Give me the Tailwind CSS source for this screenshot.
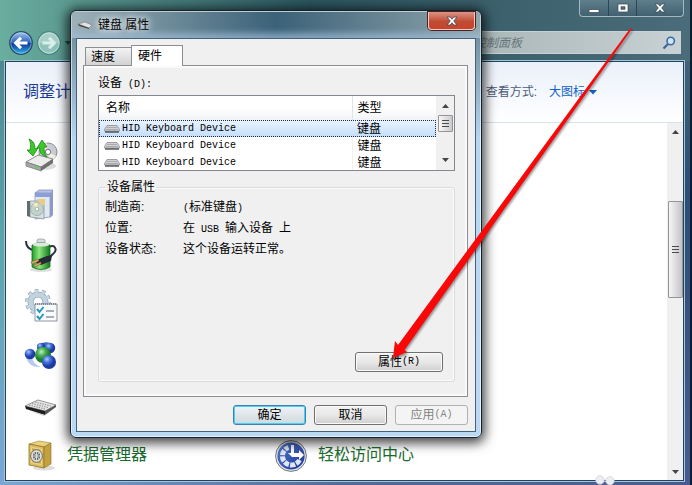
<!DOCTYPE html>
<html lang="zh-CN">
<head>
<meta charset="utf-8">
<meta name="viewport" content="width=device-width, initial-scale=1">
<title>键盘 属性</title>
<script src="https://cdn.jsdelivr.net/npm/@tailwindcss/browser@4"></script>
</head>
<body class="font-['Liberation_Sans','Noto_Sans_CJK_SC',sans-serif] text-[12px] leading-4 text-black">
<div class="relative flex h-screen flex-col overflow-hidden border-r-2 border-[#0b1f33] bg-linear-to-b from-[#4a7f86] via-[#5ba5ab] via-50% to-[#7aa6d6]">
  <!-- Right edge of the glass frame -->
  <div class="absolute inset-y-0 right-0 w-[6px] bg-linear-to-b from-[#4b6c7a] via-[#2d4c76] via-40% to-[#4a5a90]"></div>
  <div class="absolute inset-x-0 bottom-0 h-1 bg-linear-to-r from-[#7aa6d6] via-[#56699c] to-[#4a5a90]"></div>
  <!-- Control panel window -->
  <header class="relative flex h-[61px] shrink-0 justify-between bg-linear-to-r from-[#6aae9f] via-[#2c5660] via-45% to-[#4b6c7a]">
    <nav class="flex items-center gap-1 self-end pb-[6px] pl-[9px]">
      <button type="button" aria-label="后退" class="h-6 w-6">
        <svg viewBox="0 0 24 24" class="h-6 w-6">
          <defs><linearGradient id="back" x2="0" y2="1"><stop offset="0" stop-color="#a9c6ee"/><stop offset=".48" stop-color="#2b62bb"/><stop offset=".52" stop-color="#0b3691"/><stop offset="1" stop-color="#35b5ee"/></linearGradient></defs>
          <circle cx="12" cy="12" r="11.3" fill="url(#back)" stroke="#254f6e" stroke-width="1.2"/>
          <circle cx="12" cy="12" r="10.2" fill="none" stroke="#cfe6f4" stroke-opacity=".6" stroke-width=".8"/>
          <path d="M18.5 12H7M12 6.8 6.6 12l5.400 5.200" fill="none" stroke="#fff" stroke-width="3"/>
        </svg>
      </button>
      <button type="button" aria-label="前进" class="h-6 w-6">
        <svg viewBox="0 0 24 24" class="h-6 w-6">
          <circle cx="12" cy="12" r="11.300" fill="#8fc3ba" stroke="#4c8583" stroke-width="1.2"/>
          <path d="M1.800 12a10.200 10.200 0 0 1 20.400 0Z" fill="#a8d0c8"/>
          <circle cx="12" cy="12" r="10.200" fill="none" stroke="#d2ebe6" stroke-width=".8"/>
          <path d="M5.500 12H17M12 6.800l5.400 5.200-5.400 5.200" fill="none" stroke="#d9efea" stroke-width="3"/>
        </svg>
      </button>
      <svg viewBox="0 0 6 5" class="h-[5px] w-[6px]"><path d="M0 0h6L3 4Z" fill="#1d4747"/></svg>
    </nav>
    <div class="flex flex-col items-end">
      <div class="mr-[6px] flex h-[17px] divide-x divide-[#2b4654] overflow-hidden rounded-b-[4px] border border-t-0 border-[#a3b8c0] bg-linear-to-b from-[#607f8c] to-[#416171]">
        <button type="button" aria-label="最小化" class="flex w-[29px] items-center justify-center"><svg viewBox="0 0 12 12" class="h-3 w-3"><path d="M1 7.500h10v3H1Z" fill="#fff" stroke="#33454f" stroke-width=".7"/></svg></button>
        <button type="button" aria-label="最大化" class="flex w-[28px] items-center justify-center"><svg viewBox="0 0 12 12" class="h-3 w-3"><path d="M1 2h10v8H1ZM4 4.700v2.600h4V4.700Z" fill="#fff" fill-rule="evenodd" stroke="#33454f" stroke-width=".7"/></svg></button>
        <button type="button" aria-label="关闭" class="flex w-[46px] items-center justify-center"><svg viewBox="0 0 12 12" class="h-3 w-3"><path d="M1 2h3.200L6 4.200 7.800 2H11L7.700 6 11 10H7.800L6 7.800 4.200 10H1L4.300 6Z" fill="#fff" stroke="#33454f" stroke-width=".7"/></svg></button>
      </div>
      <label class="mt-[14px] mr-[9px] flex h-[23px] w-[212px] items-center border border-[#c6d2d7] bg-linear-to-r from-[#a9b6b6] to-[#c8d1d4] pr-1">
        <input type="search" aria-label="搜索控制面板" placeholder="控制面板" class="min-w-0 flex-1 bg-transparent pl-[4px] text-[12px] italic outline-none placeholder:text-[#66757a]">
        <svg viewBox="0 0 14 14" class="h-[14px] w-[14px]"><path d="m6 8-4.500 4.500" stroke="#3d6290" stroke-width="2.200"/><circle cx="8.700" cy="5" r="3.700" fill="#cfe4f0" stroke="#386da5" stroke-width="1.600"/></svg>
      </label>
    </div>
  </header>

  <div class="relative mr-[6px] mb-1 ml-[5px] flex min-h-0 flex-1 flex-col border border-[#1f4560] bg-white shadow-[0_0_0_1px_#a5c6d6]">
    <div class="flex h-[61px] shrink-0 items-center justify-between border-b border-[#d6e3ec] bg-linear-to-b from-[#eaf0fa] to-white pr-[86px] pl-[17px]">
      <h1 class="text-[16px] text-[#1c3a94]">调整计</h1>
      <div class="flex items-center gap-3 text-[#4c5b76]">
        <span>查看方式:</span>
        <button type="button" class="flex items-center gap-1 text-[#0f62c4]">大图标<svg viewBox="0 0 8 5" class="h-[5px] w-2"><path d="M0 0h8L4 4.500Z" fill="#0f62c4"/></svg></button>
      </div>
    </div>
    <div class="flex min-h-0 flex-1">
      <div class="grid min-w-0 flex-1 auto-rows-[50px] grid-cols-[251px_1fr] content-start pt-[7px] pl-[17px] text-[16px] text-[#1a6b2c]">
        <a href="#" aria-label="设备安装" class="col-span-2 flex items-center self-center">
          <svg viewBox="0 0 36 36" class="h-9 w-9">
            <ellipse cx="20" cy="29" rx="13" ry="4" fill="#dcdcdc"/>
            <circle cx="25" cy="15" r="9" fill="#c9ccd2" stroke="#8f8c94"/><path d="M25 15 18 9a9 9 0 0 1 6-3Z" fill="#f2d8df"/><path d="m25 15 8 4a9 9 0 0 1-7 5Z" fill="#eef0e0"/><circle cx="25" cy="15" r="2.600" fill="#fff" stroke="#77747b"/>
            <path d="m3 25 12-7 15 4-12 8Z" fill="#ececec" stroke="#8d8d8d"/><path d="m3 25 15 5v4L3 29Z" fill="#a7a7a7" stroke="#777" stroke-width=".7"/><path d="m18 30 12-8v4l-12 8Z" fill="#6f6f6f"/><path d="m12 30 3 1" stroke="#4be04b" stroke-width="1.500"/>
            <path d="M6 2c5 2 6 6 6 10l3-1-5 8-6-6 3 0C8 9 8 6 6 2Z" fill="#3cc928" stroke="#168a16" stroke-width=".8"/>
            <path d="m19 3 5 7h-3c0 4 0 6 3 10-6-2-8-5-7-9h-3Z" fill="#3cc928" stroke="#168a16" stroke-width=".8"/>
          </svg>
        </a>
        <a href="#" aria-label="程序和功能" class="col-span-2 flex items-center self-center">
          <svg viewBox="0 0 36 36" class="h-9 w-9">
            <path d="m12 6 4-3h14l-3 4Z" fill="#b7c2e6" stroke="#7b88b5" stroke-width=".7"/><path d="M12 6h15v24l-15 2Z" fill="#e0e8f6" stroke="#8a98bb" stroke-width=".8"/><path d="m27 7 3-4v25l-3 3Z" fill="#8e9ac6"/><path d="M12 6h15v4H12Z" fill="#8ba0d8"/>
            <path d="M7 14h14v18l-14-2Z" fill="#d8dfe3" stroke="#8d969c" stroke-width=".8"/><path d="M4 14h3v16l-3-1Z" fill="#626c71"/><circle cx="14" cy="22" r="6.500" fill="#c2d4ca" stroke="#8ba19a" stroke-width=".7"/><path d="m14 22-4-5a6 6 0 0 1 5-1Z" fill="#f8e9b8"/><circle cx="14" cy="22" r="1.800" fill="#fff" stroke="#88938d" stroke-width=".6"/>
            <path d="M14 12h8v6h-4Z" fill="#eacb82"/>
          </svg>
        </a>
        <a href="#" aria-label="电源选项" class="col-span-2 flex items-center self-center">
          <svg viewBox="0 0 36 36" class="h-9 w-9">
            <defs><linearGradient id="cell"><stop offset="0" stop-color="#239b2a"/><stop offset=".4" stop-color="#8ce67d"/><stop offset="1" stop-color="#117a1d"/></linearGradient></defs>
            <ellipse cx="18" cy="32.500" rx="11" ry="2.500" fill="#ddd"/>
            <path d="M3 4c0 6 3 8 7 9M26 10c6-3 9 3 4 7s-2 5-7 7" fill="none" stroke="#2a3240" stroke-width="2"/>
            <rect x="14" y="2" width="8" height="5" rx="2" fill="#d8dcdf" stroke="#8e9598" stroke-width=".7"/>
            <path d="M9 8q9-5 18 0v22q-9 5-18 0Z" fill="url(#cell)" stroke="#126f1b" stroke-width=".8"/><ellipse cx="18" cy="7.500" rx="8.500" ry="2" fill="#dfe5df"/>
            <path d="m16 22 8-3 5-1-1 6-10 4-5-2Z" fill="#252a35"/><path d="m8 25 7-3 1 2-7 3Zm3 3 7-3 0 2-6 3Z" fill="#ddab70" stroke="#7e512a" stroke-width=".5"/>
          </svg>
        </a>
        <a href="#" aria-label="管理工具" class="col-span-2 flex items-center self-center">
          <svg viewBox="0 0 36 36" class="h-9 w-9">
            <circle cx="15" cy="15" r="11" fill="none" stroke="#8fa3b3" stroke-width="4" stroke-dasharray="3.500 3.411"/><circle cx="15" cy="15" r="7.500" fill="none" stroke="#8fa3b3" stroke-width="6"/><circle cx="15" cy="15" r="11" fill="none" stroke="#c8d8e4" stroke-width="2.600" stroke-dasharray="3.200 3.711"/><circle cx="15" cy="15" r="7.500" fill="none" stroke="#c2d3e0" stroke-width="4.600"/>
            <path d="M12 17h22v17H12Z" fill="#f9fbfd" stroke="#8d969f"/><path d="M12 17h22" stroke="#6c7883" stroke-dasharray="1 1" stroke-width="1.500"/>
            <path d="m14 22 2.500 3 4-5M14 29l2.500 3 4-5" fill="none" stroke="#2997bd" stroke-width="2"/><path d="M23 24h8M23 30h8" stroke="#596470" stroke-width="1.200"/>
          </svg>
        </a>
        <a href="#" aria-label="家庭组" class="col-span-2 flex items-center self-center">
          <svg viewBox="0 0 36 36" class="h-9 w-9">
            <defs><radialGradient id="blue" cx=".35" cy=".3"><stop offset="0" stop-color="#a9cafc"/><stop offset=".5" stop-color="#4672d8"/><stop offset="1" stop-color="#1d3ba2"/></radialGradient><radialGradient id="green" cx=".4" cy=".3"><stop offset="0" stop-color="#c0f2bd"/><stop offset=".5" stop-color="#49b053"/><stop offset="1" stop-color="#1b7a30"/></radialGradient></defs>
            <path d="M3 21q4 10 14 9-6-3-8-9Z" fill="#b4caef"/><path d="M14 8q8-5 16-1l-2 6-10 2Z" fill="#3a65bf"/>
            <circle cx="27" cy="11" r="5.200" fill="url(#blue)"/><circle cx="18" cy="10" r="4" fill="url(#blue)"/><circle cx="7" cy="17" r="5.300" fill="url(#blue)"/><circle cx="20" cy="18" r="8" fill="url(#green)"/><circle cx="26" cy="25" r="7" fill="url(#blue)"/>
          </svg>
        </a>
        <a href="#" aria-label="键盘" class="col-span-2 flex items-center self-center">
          <svg viewBox="0 0 36 36" class="h-9 w-9">
            <path d="m2 19 13-6 18 5-11 6Z" fill="#e8e8e8" stroke="#7d7d7d" stroke-width=".8"/><path d="m2 19 20 5v4L3 22Z" fill="#1f1f1f"/><path d="m22 24 11-6v2l-11 8Z" fill="#555"/><path d="m6 18 16 4M9 16.500l16 4M12 15l16 4" stroke="#999" stroke-width="1.200" stroke-dasharray="1.500 1"/><path d="m6 24 15 5 10-6-9 5Z" fill="#ccc"/>
          </svg>
        </a>
        <a href="#" class="flex items-center gap-2 self-center">
          <svg viewBox="0 0 36 36" class="h-9 w-9">
            <ellipse cx="21" cy="31" rx="11" ry="2.500" fill="#ddd"/><path d="m6 7 10-3 12 2-7 4Z" fill="#ead27f" stroke="#9b7d28" stroke-width=".6"/><path d="m6 7 15 3v21L6 28Z" fill="#dcbf62" stroke="#8e7122" stroke-width=".8"/><path d="m21 10 7-4v21l-7 4Z" fill="#c4a040" stroke="#8e7122" stroke-width=".6"/><path d="m8.500 10.500 10 2v15l-10-2Z" fill="#cdac50" stroke="#f1dd91" stroke-width=".9"/>
            <ellipse cx="13.500" cy="19" rx="5.800" ry="6.300" fill="#e3e4e2" stroke="#6e6a5a"/><ellipse cx="13.500" cy="19" rx="3.600" ry="4" fill="#5e6264"/><path d="m10 15 7 8m0-8-7 8M13.500 13v12M8 19h11" stroke="#d8dada" stroke-width="1"/>
          </svg>凭据管理器
        </a>
        <a href="#" class="flex items-center gap-2 self-center">
          <svg viewBox="0 0 36 36" class="h-9 w-9">
            <defs><linearGradient id="ease" x2="1" y2="1"><stop offset="0" stop-color="#587fd0"/><stop offset="1" stop-color="#172f92"/></linearGradient></defs>
            <circle cx="17" cy="19" r="15.400" fill="#e5e7ea" stroke="#727984"/><circle cx="17" cy="19" r="13.600" fill="url(#ease)"/>
            <path d="M25.500 23a9 9 0 1 1-11-12.500" fill="none" stroke="#dfe7f4" stroke-width="5" stroke-dasharray="5 1.200"/>
            <path d="M17 8h3v8h5v-3l5 5-5 5v-3h-7l-4-4h3Z" fill="#fff"/>
          </svg>
          <span>轻松访问中心</span>
        </a>
      </div>
      <div class="flex w-4 shrink-0 flex-col items-center bg-[#f0f0f0] pt-[7px] pb-[6px]">
        <svg viewBox="0 0 7 4" class="h-1 w-[7px]"><path d="M3.500 0 7 4H0Z" fill="#444"/></svg>
        <div class="mt-[67px] flex h-[97px] w-[15px] flex-col items-center justify-center gap-[2px] rounded-[1px] border border-[#959595] bg-linear-to-r from-[#f6f6f6] via-[#dddddf] to-[#c4c4c6]">
          <i class="h-px w-[7px] bg-[#4b4b4b]"></i><i class="h-px w-[7px] bg-[#4b4b4b]"></i><i class="h-px w-[7px] bg-[#4b4b4b]"></i>
        </div>
        <svg viewBox="0 0 7 4" class="mt-auto h-1 w-[7px]"><path d="M0 0h7L3.500 4Z" fill="#444"/></svg>
      </div>
    </div>
  </div>

  <!-- Keyboard properties dialog -->
  <section role="dialog" aria-labelledby="dlg" class="absolute top-[10px] left-[70px] flex h-[428px] w-[412px] flex-col rounded-[6px] border border-[#12222e] bg-linear-to-b from-[#64808c] from-0% via-[#b5d5f2] via-30% to-[#bcd9f4] px-[5px] pb-[5px] shadow-[0_2px_12px_3px_rgba(0,0,0,0.75),inset_0_0_0_1px_rgba(255,255,255,0.6)]">
    <div class="mx-[-4px] mt-px flex h-[26px] shrink-0 items-center justify-between rounded-t-[4px] bg-linear-to-r from-[#9db1b8] via-[#3b6278] via-50% to-[#91a5ad] pl-[5px] shadow-[inset_0_-8px_6px_-3px_rgba(160,190,215,0.7)]">
      <h2 id="dlg" class="flex items-center gap-[5px] text-[12px] [text-shadow:0_0_6px_#fff,0_0_8px_#fff]">
        <svg viewBox="0 0 16 10" class="h-[10px] w-4"><path d="m1 4 7-2 7 3-3 3Z" fill="#e2e2e2" stroke="#777" stroke-width=".6"/><path d="m1 4 11 4v1L2 6Z" fill="#444"/></svg>键盘 属性
      </h2>
      <button type="button" aria-label="关闭" class="mr-[5px] flex h-[18px] w-[47px] items-center justify-center self-start rounded-b-[4px] border border-t-0 border-[#f2c9c0] bg-linear-to-b from-[#dd9384] via-[#c04b35] via-55% to-[#c8432a] shadow-[0_0_0_1px_#4b2222]">
        <svg viewBox="0 0 12 12" class="h-3 w-3"><path d="M1 2h3.200L6 4.200 7.800 2H11L7.700 6 11 10H7.800L6 7.800 4.200 10H1L4.300 6Z" fill="#fff" stroke="#3e4655" stroke-width=".8"/></svg>
      </button>
    </div>
    <div class="flex min-h-0 flex-1 flex-col border border-[#44627a] bg-[#f0f0f0] pt-[6px] pr-[7px] pb-[6px] pl-[6px]">
      <div role="tablist" class="z-10 -mb-px flex items-end pl-[2px]">
        <button role="tab" type="button" class="mb-px h-[18px] w-[46px] border border-r-0 border-b-0 border-[#8c8e94] bg-linear-to-b from-[#f3f3f3] to-[#d3d3d3] pl-[5px] text-left">速度</button>
        <button role="tab" type="button" aria-selected="true" class="h-[21px] w-[52px] border border-b-0 border-[#8c8e94] bg-white pl-[6px] text-left">硬件</button>
      </div>
      <div role="tabpanel" class="flex flex-1 flex-col border border-[#8c8e94] bg-[#f0f0f0] pt-[9px] pr-[12px] pb-[14px] pl-[14px] shadow-[inset_0_0_0_2px_#fafafa]">
        <p id="devices">设备<span class="font-['Liberation_Mono',monospace] text-[10px]"> (D):</span></p>
        <div class="mt-[2px] flex h-[76px] shrink-0 overflow-hidden border border-[#828790] bg-white">
          <table aria-labelledby="devices" class="h-[75px] flex-1 table-fixed border-collapse self-start text-left">
            <thead>
              <tr class="h-[24px] bg-linear-to-b from-white via-white via-50% to-[#f1f3f5]">
                <th class="border-r border-[#e0e3e6] p-0 pl-[7px] font-normal">名称</th>
                <th class="w-[84px] p-0 pl-[5px] font-normal">类型</th>
              </tr>
            </thead>
            <tbody>
              <tr class="h-[17px] bg-linear-to-b from-[#eaf3fd] to-[#c4defa] outline-1 -outline-offset-1 outline-dotted outline-[#1b2c4a]">
                <td class="p-0 pl-[5px]"><span class="flex items-center font-['Liberation_Mono',monospace] text-[10px] leading-4"><svg viewBox="0 0 16 8" class="mr-[2px] h-2 w-4"><path d="M3 .5h10l2.500 4V6H.5V4.500Z" fill="#d2d2d6" stroke="#8b8b90" stroke-width=".8"/><path d="M1 7h14" stroke="#333" stroke-width="1.200"/><path d="M3.500 2.500h9M2.500 4.500h11" stroke="#85858b" stroke-dasharray="1 1"/></svg>HID Keyboard Device</span></td>
                <td class="p-0 pl-[5px]">键盘</td>
              </tr>
              <tr class="h-[17px]">
                <td class="border-r border-[#f0f0f0] p-0 pl-[5px]"><span class="flex items-center font-['Liberation_Mono',monospace] text-[10px] leading-4"><svg viewBox="0 0 16 8" class="mr-[2px] h-2 w-4"><path d="M3 .5h10l2.500 4V6H.5V4.500Z" fill="#d2d2d6" stroke="#8b8b90" stroke-width=".8"/><path d="M1 7h14" stroke="#333" stroke-width="1.200"/><path d="M3.500 2.500h9M2.500 4.500h11" stroke="#85858b" stroke-dasharray="1 1"/></svg>HID Keyboard Device</span></td>
                <td class="p-0 pl-[5px]">键盘</td>
              </tr>
              <tr class="h-[17px]">
                <td class="border-r border-[#f0f0f0] p-0 pl-[5px]"><span class="flex items-center font-['Liberation_Mono',monospace] text-[10px] leading-4"><svg viewBox="0 0 16 8" class="mr-[2px] h-2 w-4"><path d="M3 .5h10l2.500 4V6H.5V4.500Z" fill="#d2d2d6" stroke="#8b8b90" stroke-width=".8"/><path d="M1 7h14" stroke="#333" stroke-width="1.200"/><path d="M3.500 2.500h9M2.500 4.500h11" stroke="#85858b" stroke-dasharray="1 1"/></svg>HID Keyboard Device</span></td>
                <td class="p-0 pl-[5px]">键盘</td>
              </tr>
            </tbody>
          </table>
          <div class="flex w-[18px] flex-col items-center bg-[#f0f0f0] py-2">
            <svg viewBox="0 0 7 4" class="h-1 w-[7px]"><path d="M3.500 0 7 4H0Z" fill="#444"/></svg>
            <div class="mt-[7px] flex h-[17px] w-[15px] flex-col items-center justify-center gap-[2px] rounded-[1px] border border-[#959595] bg-linear-to-r from-[#f8f8f8] to-[#cacacc]">
              <i class="h-px w-[7px] bg-[#4b4b4b]"></i><i class="h-px w-[7px] bg-[#4b4b4b]"></i><i class="h-px w-[7px] bg-[#4b4b4b]"></i>
            </div>
            <svg viewBox="0 0 7 4" class="mt-auto h-1 w-[7px]"><path d="M0 0h7L3.500 4Z" fill="#444"/></svg>
          </div>
        </div>
        <fieldset class="mt-2 flex flex-1 flex-col rounded-[3px] border border-[#d9dcdf] pr-[11px] pb-[9px] pl-[6px] shadow-[inset_0_0_0_1px_#fafafa]">
          <legend class="px-[2px]">设备属性</legend>
          <dl class="grid auto-rows-[21px] grid-cols-[78px_1fr] pt-[2px] leading-[21px]">
            <dt>制造商:</dt><dd><span class="font-['Liberation_Mono',monospace] text-[10px]">(</span>标准键盘<span class="font-['Liberation_Mono',monospace] text-[10px]">)</span></dd>
            <dt>位置:</dt><dd>在<span class="font-['Liberation_Mono',monospace] text-[10px]"> USB </span>输入设备<span class="font-['Liberation_Mono',monospace] text-[10px]"> </span>上</dd>
            <dt>设备状态:</dt><dd>这个设备运转正常。</dd>
          </dl>
          <button type="button" class="mt-auto flex h-5 w-[88px] items-center justify-center self-end rounded-[3px] border border-[#707070] bg-linear-to-b from-[#f2f2f2] via-[#e8e8e8] via-50% to-[#cfcfcf] shadow-[inset_0_0_0_1px_#fafafa]">属性<span class="font-['Liberation_Mono',monospace] text-[10px]">(R)</span></button>
        </fieldset>
      </div>
      <div class="mt-2 flex shrink-0 justify-end gap-2">
        <button type="button" class="h-5 w-[73px] rounded-[3px] border border-[#3c7fb1] bg-linear-to-b from-[#f0f3f5] to-[#cfd9de] shadow-[inset_0_0_0_1px_#48d0f5]">确定</button>
        <button type="button" class="h-5 w-[73px] rounded-[3px] border border-[#707070] bg-linear-to-b from-[#f2f2f2] via-[#e8e8e8] via-50% to-[#cfcfcf] shadow-[inset_0_0_0_1px_#fafafa]">取消</button>
        <button type="button" disabled class="flex h-5 w-[73px] items-center justify-center rounded-[3px] border border-[#adb2b5] bg-[#f4f4f4] text-[#838383]">应用<span class="font-['Liberation_Mono',monospace] text-[10px]">(A)</span></button>
      </div>
    </div>
  </section>

  <!-- Pointer arrow -->
  <svg viewBox="0 0 692 485" class="pointer-events-none absolute top-0 left-0 h-[485px] w-[692px] drop-shadow-[1px_2px_1px_rgba(0,0,0,0.4)]">
    <path d="M630.500 28l1.500 .8L404.500 350l2.500 2-14 6 2-17 3 4Z" fill="#f90808"/>
  </svg>
  <svg viewBox="0 0 24 12" class="absolute bottom-0 left-[594px] h-[10px] w-[22px]"><circle cx="6" cy="6" r="5" fill="#eceef2" stroke="#cfd3da"/><circle cx="18" cy="7" r="5" fill="#eceef2" stroke="#cfd3da"/></svg>
</div>
</body>
</html>
